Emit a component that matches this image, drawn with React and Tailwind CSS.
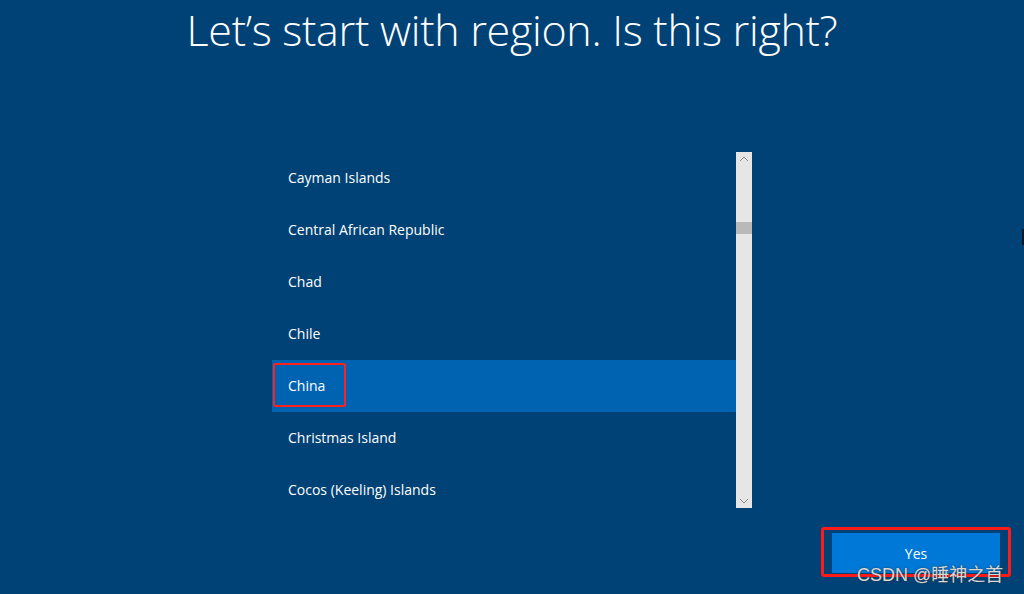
import React from "react";

const regions = [
  "Cayman Islands",
  "Central African Republic",
  "Chad",
  "Chile",
  "China",
  "Christmas Island",
  "Cocos (Keeling) Islands",
];

function ScrollBar() {
  return (
    <div className="w-[16px] h-full bg-[#e6e6e6] flex flex-col items-center relative">
      <svg width="10" height="6" viewBox="0 0 10 6" className="mt-[4px]">
        <path d="M1 5 L5 1 L9 5" stroke="#888" strokeWidth="1" fill="none" />
      </svg>
      <div className="absolute left-0 top-[70px] w-[16px] h-[12px] bg-[#b9b9b9]" />
      <div className="flex-1" />
      <svg width="10" height="6" viewBox="0 0 10 6" className="mb-[4px]">
        <path d="M1 1 L5 5 L9 1" stroke="#888" strokeWidth="1" fill="none" />
      </svg>
    </div>
  );
}

export default function App() {
  return (
    <div
      className="w-[1024px] h-[594px] bg-[#004275] text-white overflow-hidden relative flex flex-col"
      style={{ fontFamily: '"Open Sans", "Noto Sans", sans-serif' }}
    >
      <h1 className="text-center text-[43px] font-light leading-none mt-[8px] tracking-[-0.3px] h-[46px]">
        Let’s start with region. Is this right?
      </h1>

      <div className="flex ml-[272px] mt-[98px] h-[356px]">
        <div className="w-[464px] h-full overflow-hidden">
          {regions.map((r) => (
            <div
              key={r}
              className={`h-[52px] flex items-center pl-[16px] pb-[2px] text-[14px] relative ${
                r === "China" ? "bg-[#0063b1]" : ""
              }`}
            >
              {r === "China" && (
                <div className="absolute left-[1px] top-[3px] w-[73px] h-[44px] border-[2px] border-[#ff2020] rounded-[2px]" />
              )}
              <span className="relative">{r}</span>
            </div>
          ))}
        </div>
        <ScrollBar />
      </div>

      <div className="flex justify-end mr-[13px] mt-[19px]">
        <div className="w-[190px] h-[50px] border-[3px] border-[#ff1a1a] rounded-[3px] px-[8px] pt-[3px] relative">
          <div className="w-[168px] h-[40px] bg-[#0078d7] flex items-center justify-center text-[14px]">
            Yes
          </div>
          <div
            className="absolute left-[33px] top-[32px] text-[18px] text-[#d8d8d8] whitespace-nowrap"
            style={{ fontFamily: '"Liberation Sans", "Noto Sans CJK SC", sans-serif', textShadow: "0 0 2px #333" }}
          >
            CSDN @睡神之首
          </div>
        </div>
      </div>

      <div className="absolute right-0 top-[229px] w-[2px] h-[16px] bg-[#0a1a2a]" />
    </div>
  );
}
